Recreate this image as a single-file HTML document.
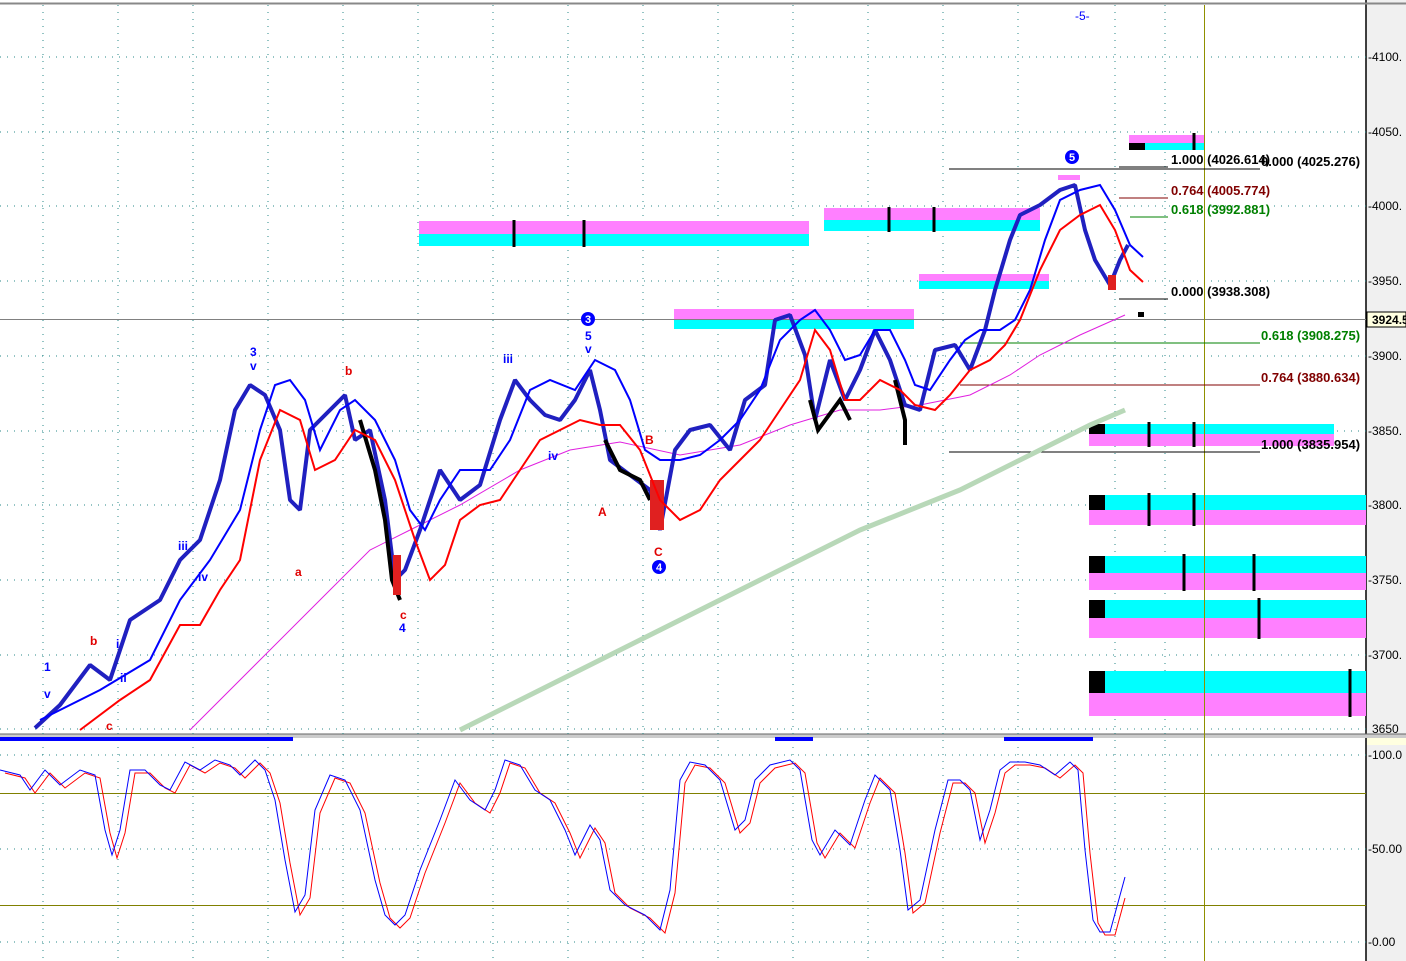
<!DOCTYPE html>
<html><head><meta charset="utf-8"><style>
html,body{margin:0;padding:0;background:#fff;width:1406px;height:961px;overflow:hidden}
svg text{font-family:"Liberation Sans",Arial,sans-serif}
</style></head><body>
<svg width="1406" height="961" xmlns="http://www.w3.org/2000/svg">
<rect x="0" y="0" width="1406" height="961" fill="#fff"/>
<rect x="1366" y="0" width="40" height="961" fill="#f0f0f0"/>
<line x1="1366" y1="0" x2="1366" y2="961" stroke="#000" stroke-width="1.5"/>
<line x1="0" y1="3.5" x2="1406" y2="3.5" stroke="#888" stroke-width="2"/>
<rect x="0" y="734" width="1406" height="4" fill="#ccc"/>
<line x1="0" y1="734" x2="1406" y2="734" stroke="#666"/>
<g stroke="#2a8a8a" stroke-width="1" stroke-dasharray="1,6">
<line x1="0" y1="57" x2="1366" y2="57"/><line x1="0" y1="132" x2="1366" y2="132"/>
<line x1="0" y1="206" x2="1366" y2="206"/><line x1="0" y1="281" x2="1366" y2="281"/>
<line x1="0" y1="356" x2="1366" y2="356"/><line x1="0" y1="431" x2="1366" y2="431"/>
<line x1="0" y1="505" x2="1366" y2="505"/><line x1="0" y1="580" x2="1366" y2="580"/>
<line x1="0" y1="655" x2="1366" y2="655"/><line x1="0" y1="729" x2="1366" y2="729"/>
<line x1="0" y1="755" x2="1366" y2="755"/><line x1="0" y1="849" x2="1366" y2="849"/>
<line x1="0" y1="942" x2="1366" y2="942"/>
<line x1="43" y1="5" x2="43" y2="961"/><line x1="118" y1="5" x2="118" y2="961"/>
<line x1="193" y1="5" x2="193" y2="961"/><line x1="268" y1="5" x2="268" y2="961"/>
<line x1="343" y1="5" x2="343" y2="961"/><line x1="418" y1="5" x2="418" y2="961"/>
<line x1="493" y1="5" x2="493" y2="961"/><line x1="568" y1="5" x2="568" y2="961"/>
<line x1="643" y1="5" x2="643" y2="961"/><line x1="718" y1="5" x2="718" y2="961"/>
<line x1="793" y1="5" x2="793" y2="961"/><line x1="868" y1="5" x2="868" y2="961"/>
<line x1="943" y1="5" x2="943" y2="961"/><line x1="1018" y1="5" x2="1018" y2="961"/>
<line x1="1115" y1="5" x2="1115" y2="961"/><line x1="1165" y1="5" x2="1165" y2="961"/>
</g>
<g>
<rect x="1129" y="135" width="75" height="8" fill="#ff80ff"/><rect x="1129" y="143" width="75" height="7" fill="#00ffff"/><rect x="1129" y="143" width="16" height="7" fill="#000"/>
<rect x="419" y="221" width="390" height="13" fill="#ff80ff"/><rect x="419" y="234" width="390" height="12" fill="#00ffff"/>
<rect x="824" y="208" width="216" height="12" fill="#ff80ff"/><rect x="824" y="220" width="216" height="11" fill="#00ffff"/>
<rect x="919" y="274" width="130" height="7" fill="#ff80ff"/><rect x="919" y="281" width="130" height="8" fill="#00ffff"/>
<rect x="674" y="309" width="240" height="11" fill="#ff80ff"/><rect x="674" y="320" width="240" height="9" fill="#00ffff"/>
<rect x="1089" y="424" width="245" height="10" fill="#00ffff"/><rect x="1089" y="434" width="245" height="12" fill="#ff80ff"/><rect x="1089" y="424" width="16" height="10" fill="#000"/>
<rect x="1089" y="495" width="277" height="15" fill="#00ffff"/><rect x="1089" y="510" width="277" height="15" fill="#ff80ff"/><rect x="1089" y="495" width="16" height="15" fill="#000"/>
<rect x="1089" y="556" width="277" height="17" fill="#00ffff"/><rect x="1089" y="573" width="277" height="17" fill="#ff80ff"/><rect x="1089" y="556" width="16" height="17" fill="#000"/>
<rect x="1089" y="600" width="277" height="18" fill="#00ffff"/><rect x="1089" y="618" width="277" height="20" fill="#ff80ff"/><rect x="1089" y="600" width="16" height="18" fill="#000"/>
<rect x="1089" y="671" width="277" height="22" fill="#00ffff"/><rect x="1089" y="693" width="277" height="23" fill="#ff80ff"/><rect x="1089" y="671" width="16" height="22" fill="#000"/>
</g>
<g stroke="#000" stroke-width="3">
<line x1="1194" y1="133" x2="1194" y2="150"/>
<line x1="514" y1="220" x2="514" y2="247"/><line x1="584" y1="220" x2="584" y2="247"/>
<line x1="889" y1="207" x2="889" y2="232"/><line x1="934" y1="207" x2="934" y2="232"/>
<line x1="1149" y1="422" x2="1149" y2="447"/><line x1="1194" y1="422" x2="1194" y2="447"/>
<line x1="1149" y1="493" x2="1149" y2="526"/><line x1="1194" y1="493" x2="1194" y2="526"/>
<line x1="1184" y1="554" x2="1184" y2="591"/><line x1="1254" y1="554" x2="1254" y2="591"/>
<line x1="1259" y1="598" x2="1259" y2="639"/><line x1="1350" y1="669" x2="1350" y2="717"/>
</g>
<line x1="0" y1="319.5" x2="1366" y2="319.5" stroke="#808080"/>
<line x1="1204.5" y1="5" x2="1204.5" y2="961" stroke="#909000"/>
<line x1="949" y1="169" x2="1260" y2="169" stroke="#000"/>
<line x1="1119" y1="167" x2="1168" y2="167" stroke="#000"/>
<line x1="1119" y1="198" x2="1168" y2="198" stroke="#800000"/>
<line x1="1130" y1="217" x2="1168" y2="217" stroke="#008000"/>
<line x1="1119" y1="299" x2="1168" y2="299" stroke="#000"/>
<line x1="960" y1="343" x2="1260" y2="343" stroke="#008000"/>
<line x1="960" y1="385" x2="1260" y2="385" stroke="#800000"/>
<line x1="949" y1="452" x2="1260" y2="452" stroke="#000"/>
<polyline fill="none" stroke="#b8d8b8" stroke-width="5" points="460,730 560,680 660,630 760,580 860,530 960,490 1040,450 1090,425 1125,410"/>
<polyline fill="none" stroke="#e020e0" stroke-width="1" points="190,730 260,660 320,600 370,550 410,530 460,505 520,470 570,450 620,442 680,455 740,445 790,425 840,410 880,410 920,405 970,395 1010,375 1040,355 1080,335 1125,315"/>
<polyline fill="none" stroke="#2020c0" stroke-width="4" stroke-linejoin="bevel" points="35,728 60,705 90,665 110,680 130,620 160,600 180,560 200,540 220,480 235,410 250,385 265,395 280,430 290,500 300,510 310,430 330,410 345,395 355,440 370,430 385,500 395,580 405,570 420,530 440,470 460,500 480,485 500,420 515,380 530,400 545,415 560,420 575,400 590,370 600,410 610,460 630,475 650,490 660,530 675,450 690,430 710,425 730,450 745,400 765,385 775,320 790,315 805,355 815,420 830,360 845,400 860,370 875,330 890,360 905,405 920,410 935,350 955,345 970,370 985,330 995,290 1010,240 1020,215 1040,205 1060,190 1075,185 1085,230 1095,260 1110,285 1120,260 1128,245"/>
<polyline fill="none" stroke="#000" stroke-width="4" points="360,420 375,470 385,520 392,580 400,600"/>
<polyline fill="none" stroke="#000" stroke-width="4" points="605,440 620,470 640,480 650,500"/>
<polyline fill="none" stroke="#000" stroke-width="4" points="810,400 818,430 840,400 850,420"/>
<polyline fill="none" stroke="#000" stroke-width="4" points="895,380 905,420 905,445"/>
<rect x="393" y="555" width="8" height="40" fill="#e02020"/>
<rect x="650" y="480" width="14" height="50" fill="#e02020"/>
<rect x="1108" y="275" width="8" height="15" fill="#e02020"/>
<rect x="1058" y="175" width="22" height="5" fill="#ff80ff"/>
<polyline fill="none" stroke="#0000ff" stroke-width="2" points="40,720 100,690 150,660 180,600 210,560 240,510 260,430 275,385 290,380 305,400 320,450 340,410 355,400 375,420 395,460 410,510 425,530 440,500 460,470 490,470 510,440 530,390 550,380 575,390 595,360 615,370 630,400 645,450 660,460 680,460 700,455 720,440 740,420 760,390 780,340 800,320 815,310 830,330 845,360 860,355 875,330 890,330 905,360 915,385 930,390 950,360 965,340 980,330 1000,330 1015,320 1030,290 1045,240 1060,200 1080,190 1100,185 1115,210 1130,245 1143,257"/>
<polyline fill="none" stroke="#ff0000" stroke-width="2" points="80,730 120,700 150,680 180,625 200,625 220,590 240,560 260,460 280,410 300,420 315,470 335,460 355,430 375,440 395,480 415,540 430,580 445,565 460,520 480,505 500,500 520,470 540,440 560,430 580,420 600,425 620,425 640,450 660,500 680,520 700,510 720,480 740,460 760,440 780,410 800,380 815,330 830,350 845,400 860,400 880,380 900,390 915,405 935,410 950,395 970,370 990,360 1005,345 1020,320 1040,270 1060,230 1080,215 1100,205 1115,230 1130,270 1143,282"/>
<rect x="1138" y="312" width="6" height="5" fill="#000"/>
<g font-size="12" font-weight="bold">
<text x="44" y="671" fill="#0000ff">1</text><text x="44" y="698" fill="#0000ff">v</text>
<text x="90" y="645" fill="#e00000">b</text><text x="106" y="730" fill="#e00000">c</text>
<text x="116" y="648" fill="#0000ff">i</text><text x="120" y="682" fill="#0000ff">ii</text>
<text x="178" y="550" fill="#0000ff">iii</text><text x="198" y="581" fill="#0000ff">iv</text>
<text x="250" y="356" fill="#0000ff">3</text><text x="250" y="370" fill="#0000ff">v</text>
<text x="345" y="375" fill="#e00000">b</text><text x="295" y="576" fill="#e00000">a</text>
<text x="400" y="619" fill="#e00000">c</text><text x="399" y="632" fill="#0000ff">4</text>
<text x="503" y="363" fill="#0000ff">iii</text><text x="548" y="460" fill="#0000ff">iv</text>
<text x="585" y="340" fill="#0000ff">5</text><text x="585" y="353" fill="#0000ff">v</text>
<text x="598" y="516" fill="#e00000">A</text><text x="645" y="444" fill="#e00000">B</text>
<text x="654" y="556" fill="#e00000">C</text>
<text x="1075" y="20" fill="#0000ff" font-weight="normal">-5-</text>
</g>
<g font-size="11" font-weight="bold" fill="#fff" text-anchor="middle">
<circle cx="588" cy="319" r="7" fill="#0000ff"/><text x="588" y="323">3</text>
<circle cx="659" cy="567" r="7" fill="#0000ff"/><text x="659" y="571">4</text>
<circle cx="1072" cy="157" r="7" fill="#0000ff"/><text x="1072" y="161">5</text>
</g>
<g font-size="13" font-weight="bold">
<text x="1171" y="164" fill="#000">1.000 (4026.614)</text>
<text x="1261" y="166" fill="#000">0.000 (4025.276)</text>
<text x="1171" y="195" fill="#800000">0.764 (4005.774)</text>
<text x="1171" y="214" fill="#008000">0.618 (3992.881)</text>
<text x="1171" y="296" fill="#000">0.000 (3938.308)</text>
<text x="1261" y="340" fill="#008000">0.618 (3908.275)</text>
<text x="1261" y="382" fill="#800000">0.764 (3880.634)</text>
<text x="1261" y="449" fill="#000">1.000 (3835.954)</text>
</g>
<g font-size="12" fill="#000">
<text x="1368" y="61">-4100.</text><text x="1368" y="136">-4050.</text>
<text x="1368" y="210">-4000.</text><text x="1368" y="285">-3950.</text>
<text x="1368" y="360">-3900.</text><text x="1368" y="435">-3850.</text>
<text x="1368" y="509">-3800.</text><text x="1368" y="584">-3750.</text>
<text x="1368" y="659">-3700.</text><text x="1372" y="733">3650</text>
<text x="1368" y="759">-100.0</text><text x="1368" y="853">-50.00</text><text x="1368" y="946">-0.00</text>
</g>
<rect x="1367" y="312" width="39" height="15" fill="#ffffe0" stroke="#000"/>
<text x="1372" y="324" font-size="12" font-weight="bold">3924.5</text>
<rect x="1367" y="738" width="39" height="7" fill="#ffffe0"/>
<rect x="0" y="737" width="293" height="4" fill="#0000ff"/>
<rect x="775" y="737" width="38" height="4" fill="#0000ff"/>
<rect x="1004" y="737" width="89" height="4" fill="#0000ff"/>
<line x1="0" y1="793.5" x2="1366" y2="793.5" stroke="#808000"/>
<line x1="0" y1="905.5" x2="1366" y2="905.5" stroke="#808000"/>
<polyline fill="none" stroke="#ff0000" stroke-width="1" transform="translate(5,3)" points="0,770 20,775 30,790 45,770 60,785 80,770 95,775 105,830 112,855 120,830 130,770 145,770 160,785 170,790 185,762 200,770 215,760 230,765 240,775 255,760 265,770 275,800 285,860 295,912 305,895 315,810 330,775 345,780 360,810 375,880 385,915 395,925 405,915 420,870 440,820 455,780 470,800 485,810 495,790 505,760 520,765 535,790 550,800 565,830 575,855 590,825 600,840 610,890 625,905 645,915 660,930 670,890 680,780 690,762 705,765 720,780 735,830 745,820 755,780 770,765 790,760 800,770 812,840 820,855 835,830 850,845 865,800 875,775 890,790 900,850 908,910 920,900 935,830 948,780 960,780 970,790 980,840 990,810 1000,770 1010,762 1025,762 1040,765 1055,775 1070,762 1078,770 1085,850 1093,920 1100,932 1110,932 1120,895"/>
<polyline fill="none" stroke="#0000ff" stroke-width="1" points="0,770 20,775 30,790 45,770 60,785 80,770 95,775 105,830 112,855 120,830 130,770 145,770 160,785 170,790 185,762 200,770 215,760 230,765 240,775 255,760 265,770 275,800 285,860 295,912 305,895 315,810 330,775 345,780 360,810 375,880 385,915 395,925 405,915 420,870 440,820 455,780 470,800 485,810 495,790 505,760 520,765 535,790 550,800 565,830 575,855 590,825 600,840 610,890 625,905 645,915 660,930 670,890 680,780 690,762 705,765 720,780 735,830 745,820 755,780 770,765 790,760 800,770 812,840 820,855 835,830 850,845 865,800 875,775 890,790 900,850 908,910 920,900 935,830 948,780 960,780 970,790 980,840 990,810 1000,770 1010,762 1025,762 1040,765 1055,775 1070,762 1078,770 1085,850 1093,920 1100,932 1110,932 1125,877"/>
</svg>
</body></html>
